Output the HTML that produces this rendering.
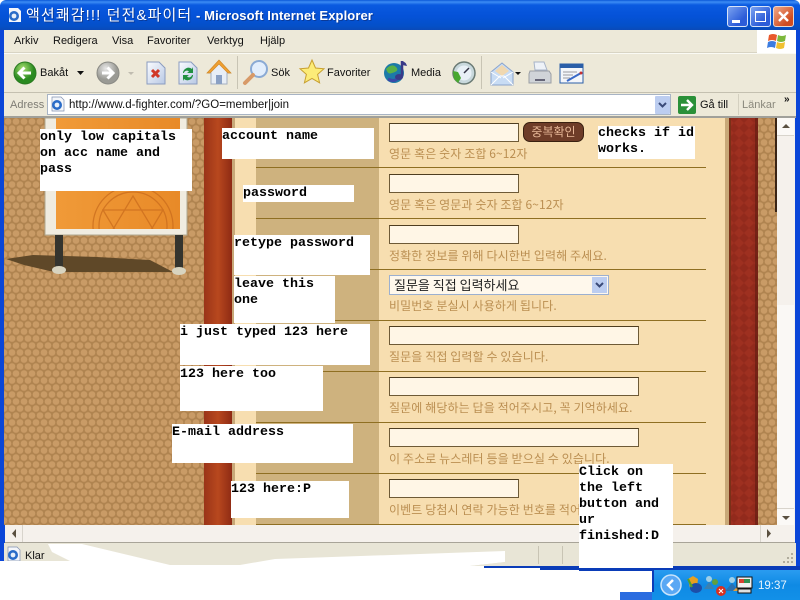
<!DOCTYPE html>
<html><head><meta charset="utf-8">
<style>
html,body{margin:0;padding:0;width:800px;height:600px;overflow:hidden;background:#fff}
body{position:relative;font-family:"Liberation Sans","Noto Sans CJK KR",sans-serif}
.a{position:absolute}
.t{position:absolute;font-size:11px;line-height:14px;color:#111;white-space:nowrap;font-family:"Liberation Sans",sans-serif}
.w{position:absolute;box-sizing:border-box;padding-top:1px;background:#fff;font:bold 13.33px/16px "Liberation Mono",monospace;color:#000;white-space:pre;overflow:hidden}
.i{position:absolute;background:#fff6e6;border:1px solid #6e5a36;border-top-color:#4e3d20;box-sizing:border-box;height:19px}
.h{position:absolute;left:389px;font:12px/14px "Noto Sans CJK KR",sans-serif;color:#bb8f52;white-space:nowrap;letter-spacing:.1px}
.l{position:absolute;left:256px;width:450px;height:1px;background:#8f6f22}
</style></head><body>

<!-- title bar -->
<div class="a" style="left:0;top:0;width:800px;height:30px;border-radius:6px 6px 0 0;background:linear-gradient(#0a58d8 0,#3c8cf4 2px,#0a5ae0 5px,#0552d8 16px,#0450c8 26px,#0a4ab8 30px)"></div>
<svg class="a" style="left:7px;top:7px" width="16" height="16"><path d="M2 1h9l3 3v11H2z" fill="#f4f6fa"/><circle cx="7" cy="9" r="5" fill="#2a6cc8"/><circle cx="7" cy="9" r="2.400" fill="#e8f0fa"/></svg>
<div class="a" style="left:26px;top:7px;font:bold 13px/18px 'Liberation Sans','Noto Sans CJK KR',sans-serif;color:#fff;white-space:nowrap;text-shadow:1px 1px #0a3a98;letter-spacing:.1px"><span style="font-size:15px;font-weight:normal;letter-spacing:1.1px">액션쾌감!!! 던전&amp;파이터</span> - Microsoft Internet Explorer</div>
<div class="a" style="left:727px;top:6px;width:21px;height:21px;box-sizing:border-box;border:1px solid #d8e4f8;border-radius:3px;background:linear-gradient(135deg,#7aa2f0,#2c5cd8 70%)"><div class="a" style="left:4px;top:13px;width:8px;height:3px;background:#fff"></div></div>
<div class="a" style="left:750px;top:6px;width:21px;height:21px;box-sizing:border-box;border:1px solid #d8e4f8;border-radius:3px;background:linear-gradient(135deg,#7aa2f0,#2c5cd8 70%)"><div class="a" style="left:4px;top:4px;width:11px;height:11px;box-sizing:border-box;border:1px solid #fff;border-top-width:2px"></div></div>
<div class="a" style="left:773px;top:6px;width:21px;height:21px;box-sizing:border-box;border:1px solid #e8d8d0;border-radius:3px;background:linear-gradient(135deg,#f0a888,#d04c20 75%)"><svg width="19" height="19"><path d="M5 5l9 9M14 5l-9 9" stroke="#fff" stroke-width="2.400"/></svg></div>

<!-- chrome -->
<div class="a" style="left:0;top:30px;width:800px;height:536px;background:#0a46d8"></div>
<div class="a" style="left:4px;top:30px;width:792px;height:88px;background:#ede9d9"></div>
<div class="a" style="left:4px;top:52px;width:792px;height:1px;background:#d8d4c4"></div>
<div class="a" style="left:4px;top:53px;width:792px;height:1px;background:#fafaf4"></div>
<div class="a" style="left:4px;top:92px;width:792px;height:1px;background:#c4c0b0"></div>
<div class="a" style="left:4px;top:116px;width:792px;height:2px;background:#a0a09a"></div>
<div class="t" style="left:14px;top:34px">Arkiv</div>
<div class="t" style="left:53px;top:34px">Redigera</div>
<div class="t" style="left:112px;top:34px">Visa</div>
<div class="t" style="left:147px;top:34px">Favoriter</div>
<div class="t" style="left:207px;top:34px">Verktyg</div>
<div class="t" style="left:260px;top:34px">Hjälp</div>
<div class="a" style="left:757px;top:30px;width:39px;height:23px;background:#fff"></div>
<svg class="a" style="left:767px;top:31px" width="21" height="20"><path d="M2 4q4-2 8 0l-1 6q-4-2-8 0z" fill="#e8582c"/><path d="M11 4q4 2 8 0l-1 6q-4 2-8 0z" fill="#7cb83c"/><path d="M1 11q4-2 8 0l-1 6q-4-2-8 0z" fill="#3c7ce0"/><path d="M10 11q4 2 8 0l-1 6q-4 2-8 0z" fill="#f0c030"/></svg>

<!-- toolbar -->
<svg class="a" style="left:0;top:53px" width="600" height="39">
<defs><radialGradient id="gr" cx=".4" cy=".3"><stop offset="0" stop-color="#a8e070"/><stop offset="1" stop-color="#2a8a20"/></radialGradient>
<radialGradient id="gy" cx=".4" cy=".3"><stop offset="0" stop-color="#e8e8e8"/><stop offset="1" stop-color="#9a9a94"/></radialGradient>
<linearGradient id="dc" x1="0" y1="0" x2="1" y2="1"><stop offset="0" stop-color="#fbfcff"/><stop offset="1" stop-color="#b8c8e4"/></linearGradient></defs>
<circle cx="25" cy="20" r="11" fill="url(#gr)" stroke="#2a7a20"/><path d="M31 20H20M24.500 14.500L19 20l5.500 5.500" fill="none" stroke="#fff" stroke-width="3"/>
<path d="M77 18h7l-3.500 4z" fill="#111"/>
<circle cx="108" cy="20" r="11" fill="url(#gy)" stroke="#8a8a84"/><path d="M102 20h11M107.500 14.500L113 20l-5.500 5.500" fill="none" stroke="#fff" stroke-width="3"/>
<path d="M128 19h6l-3 3z" fill="#c0bcb0"/>
<path d="M147 9h12l6 6v16h-18z" fill="url(#dc)" stroke="#8a9cc0"/><path d="M152 17l7 7M159 17l-7 7" stroke="#d03828" stroke-width="3"/>
<path d="M179 9h12l6 6v16h-18z" fill="url(#dc)" stroke="#8a9cc0"/><path d="M183 20a5.500 5.500 0 0 1 9-4l1-2v6h-6l2-1.500a3 3 0 0 0-5 1.500zM193 22a5.500 5.500 0 0 1-9 4l-1 2v-6h6l-2 1.500a3 3 0 0 0 5-1.500z" fill="#209040"/>
<path d="M209 20l10-11 11 11h-3v11h-16V20z" fill="#e8eef6" stroke="#a4aec0"/><path d="M207 20l12-13 12 13-3 0-9-9-9 9z" fill="#f0a030" stroke="#d08828" stroke-width=".7"/><rect x="216" y="22" width="6" height="9" fill="#8aa0c4"/>
<rect x="237" y="3" width="1" height="33" fill="#c8c4b4"/>
<circle cx="259" cy="16" r="8" fill="#e2eefc" stroke="#8aaad4" stroke-width="2"/><path d="M253 22l-8 8" stroke="#d89a68" stroke-width="4" stroke-linecap="round"/>
<path d="M312 7l3.500 8 8.500 .8-6.400 5.600 2 8.400-7.600-4.400-7.600 4.400 2-8.400-6.400-5.600 8.500-.8z" fill="#fcec78" stroke="#c8a030"/>
<circle cx="394" cy="20" r="10" fill="#1c7aa8"/><path d="M386 16q6-6 10-2t-4 6q-4 2-6-4z" fill="#58b048"/><path d="M388 26q6 3 9 0" stroke="#3a48a8" stroke-width="3" fill="none"/><path d="M402 8v15" stroke="#3a3a88" stroke-width="2.500"/><path d="M402 8q4 1 5 5l-5-1z" fill="#3a3a88"/><ellipse cx="399" cy="24" rx="4" ry="3" fill="#3a3a88"/>
<circle cx="464" cy="20" r="11" fill="#c8d8dc" stroke="#6a7a74" stroke-width="1.500"/><circle cx="464" cy="20" r="7.500" fill="#e8f0f6"/><path d="M464 20l5-5" stroke="#334" stroke-width="1.500"/><path d="M453 18l5 1 3 6-3 5-4-4z" fill="#48a830"/>
<rect x="481" y="3" width="1" height="33" fill="#c8c4b4"/>
<path d="M491 19l11-9 11 9v13h-22z" fill="#c8dcf4" stroke="#8aa4cc"/><path d="M495 18l7-6 7 6-7 5z" fill="#f0d8b0"/><path d="M491 32l9-9h4l9 9M491 19l10 6M513 19l-10 6" fill="none" stroke="#fff"/>
<path d="M515 19h6l-3 3z" fill="#111"/>
<path d="M534 9h10l3 8h-12z" fill="#eef2f8" stroke="#a8b4c8"/><path d="M530 18h19l2 3v9h-22v-9z" fill="#d0d4d8" stroke="#9a9ea4"/><rect x="535" y="26" width="10" height="2" fill="#667"/>
<rect x="560" y="11" width="23" height="19" fill="#f4f6fa" stroke="#2a5ea8"/><rect x="560" y="11" width="23" height="4" fill="#2a5ea8"/><path d="M563 19h14M563 22h10M563 25h7" stroke="#9a9aa0"/><path d="M567 28l14-8" stroke="#3a6ac8" stroke-width="2"/><circle cx="581" cy="20" r="1.500" fill="#c83030"/>
</svg>
<div class="t" style="left:40px;top:66px">Bakåt</div>
<div class="t" style="left:271px;top:66px">Sök</div>
<div class="t" style="left:327px;top:66px">Favoriter</div>
<div class="t" style="left:411px;top:66px">Media</div>

<!-- address -->
<div class="t" style="left:10px;top:98px;color:#7e7c74">Adress</div>
<div class="a" style="left:47px;top:94px;width:624px;height:21px;box-sizing:border-box;border:1px solid #a8b4c4;background:#fff"></div>
<svg class="a" style="left:50px;top:96px" width="16" height="16"><path d="M2 1h9l3 3v11H2z" fill="#f4f6fa" stroke="#8090b0" stroke-width=".7"/><circle cx="7" cy="9" r="5" fill="#2a6cc8"/><circle cx="7" cy="9" r="2.400" fill="#e8f0fa"/></svg>
<div class="t" style="left:69px;top:98px;font-size:11.500px">http://www.d-fighter.com/?GO=member|join</div>
<div class="a" style="left:655px;top:96px;width:15px;height:18px;background:#bccdf0;border-radius:1px"><svg width="15" height="18"><path d="M4 7l3.500 3.500L11 7" fill="none" stroke="#3a4a78" stroke-width="2"/></svg></div>
<svg class="a" style="left:678px;top:96px" width="18" height="18"><rect width="18" height="18" rx="2" fill="#2a9038"/><path d="M3 9h11M9 4l5 5-5 5" fill="none" stroke="#fff" stroke-width="2.400"/></svg>
<div class="t" style="left:700px;top:98px">Gå till</div>
<div class="a" style="left:738px;top:94px;width:1px;height:21px;background:#d4d0c0"></div>
<div class="t" style="left:742px;top:98px;color:#8a887c">Länkar</div>
<div class="t" style="left:784px;top:93px;font-weight:bold;font-size:10px">»</div>

<!-- content -->
<svg class="a" style="left:4px;top:118px" width="774" height="407">
<defs>
<pattern id="hex" width="8" height="14" patternUnits="userSpaceOnUse"><rect width="8" height="14" fill="#b08450"/><circle cx="4" cy="3.500" r="3.300" fill="#c99b66"/><circle cx="0" cy="10.500" r="3.300" fill="#c99b66"/><circle cx="8" cy="10.500" r="3.300" fill="#c99b66"/></pattern>
<pattern id="red" width="10" height="10" patternUnits="userSpaceOnUse"><rect width="10" height="10" fill="#922a1c"/><path d="M0 5L5 0l5 5-5 5z" fill="#9e3020"/></pattern>
<linearGradient id="red2" x1="0" x2="1" y1="0" y2="0"><stop offset="0" stop-color="#9a3418"/><stop offset=".5" stop-color="#b8481e"/><stop offset="1" stop-color="#8e2a14"/></linearGradient>
<linearGradient id="org" x1="0" x2="1" y1="0" y2="0"><stop offset="0" stop-color="#f09a38"/><stop offset="1" stop-color="#e88a28"/></linearGradient>
<clipPath id="bd"><rect x="52" y="0" width="124" height="111"/></clipPath>
</defs>
<rect width="200" height="407" fill="url(#hex)"/>
<rect x="200" width="28" height="407" fill="url(#red2)"/>
<rect x="228" width="3" height="407" fill="#c8a878"/>
<rect x="231" width="21" height="407" fill="#f7deb0"/>
<rect x="252" width="123" height="407" fill="#ceb27e"/>
<rect x="375" width="346" height="407" fill="#f7deb0"/>
<rect x="721" width="4" height="407" fill="#c8a878"/>
<rect x="725" width="29" height="407" fill="url(#red)"/>
<rect x="725" width="2" height="407" fill="#7a3018"/>
<rect x="751" width="3" height="407" fill="#5c1a10" opacity=".6"/>
<rect x="754" width="19" height="407" fill="url(#hex)"/>
<rect x="771" width="2" height="94" fill="#3a2414"/>
<!-- sign -->
<path d="M41 0h142v117H41z" fill="#f0ece0" stroke="#b0a890"/>
<rect x="52" width="124" height="111" fill="url(#org)"/>
<g clip-path="url(#bd)" fill="none" stroke="#c86a1c" stroke-width="1.300" opacity=".7"><circle cx="129" cy="108" r="40"/><circle cx="129" cy="108" r="34"/><path d="M99 128l30-50 30 50zM99 92h60l-30 50z"/></g>
<path d="M2 141l27-4 64 2 53 3 23 12-119 0-30-7z" fill="#5f4828"/>
<rect x="51" y="117" width="8" height="33" fill="#34342e"/><rect x="171" y="117" width="8" height="33" fill="#34342e"/>
<ellipse cx="55" cy="152" rx="7" ry="4" fill="#d8d4c0"/><ellipse cx="175" cy="153" rx="7" ry="4" fill="#d8d4c0"/>
</svg>
<div class="l" style="top:167px"></div><div class="l" style="top:218px"></div><div class="l" style="top:269px"></div><div class="l" style="top:320px"></div><div class="l" style="top:371px"></div><div class="l" style="top:422px"></div><div class="l" style="top:473px"></div><div class="l" style="top:524px"></div>

<div class="i" style="left:389px;top:123px;width:130px"></div>
<div class="a" style="left:523px;top:122px;width:61px;height:20px;box-sizing:border-box;background:#6e3c28;border:1px solid #3a2010;border-radius:7px;color:#e8b898;font:12px/18px 'Noto Sans CJK KR',sans-serif;text-align:center">중복확인</div>
<div class="h" style="top:147px">영문 혹은 숫자 조합 6~12자</div>
<div class="i" style="left:389px;top:174px;width:130px"></div>
<div class="h" style="top:198px">영문 혹은 영문과 숫자 조합 6~12자</div>
<div class="i" style="left:389px;top:225px;width:130px"></div>
<div class="h" style="top:249px">정확한 정보를 위해 다시한번 입력해 주세요.</div>
<div class="a" style="left:389px;top:275px;width:220px;height:20px;box-sizing:border-box;background:#fff8ec;border:1px solid #9cb0d0;font:13px/18px 'Noto Sans CJK KR',sans-serif;color:#222;padding-left:4px">질문을 직접 입력하세요</div>
<div class="a" style="left:592px;top:277px;width:15px;height:16px;background:#bccdf0"><svg width="15" height="16"><path d="M4 6l3.500 3.500L11 6" fill="none" stroke="#3a4a78" stroke-width="2"/></svg></div>
<div class="h" style="top:299px">비밀번호 분실시 사용하게 됩니다.</div>
<div class="i" style="left:389px;top:326px;width:250px"></div>
<div class="h" style="top:350px">질문을 직접 입력할 수 있습니다.</div>
<div class="i" style="left:389px;top:377px;width:250px"></div>
<div class="h" style="top:401px">질문에 해당하는 답을 적어주시고, 꼭 기억하세요.</div>
<div class="i" style="left:389px;top:428px;width:250px"></div>
<div class="h" style="top:452px">이 주소로 뉴스레터 등을 받으실 수 있습니다.</div>
<div class="i" style="left:389px;top:479px;width:130px"></div>
<div class="h" style="top:503px">이벤트 당첨시 연락 가능한 번호를 적어주세요.</div>

<!-- vertical scrollbar -->
<div class="a" style="left:777px;top:118px;width:18px;height:407px;background:#f5f1ec"></div>
<div class="a" style="left:777px;top:305px;width:17px;height:203px;background:#faf8f5"></div>
<div class="a" style="left:777px;top:118px;width:17px;height:17px;background:#fbf9f6;border-bottom:1px solid #d8d4cc"><svg width="17" height="17"><path d="M5 10l4-4 4 4z" fill="#5a5040"/></svg></div>
<div class="a" style="left:777px;top:508px;width:17px;height:17px;background:#fbf9f6;border-top:1px solid #d8d4cc"><svg width="17" height="17"><path d="M5 7l4 4 4-4z" fill="#5a5040"/></svg></div>
<!-- horizontal scrollbar -->
<div class="a" style="left:5px;top:525px;width:790px;height:17px;background:#f5f1ec;border-bottom:1px solid #a8a498"></div>
<div class="a" style="left:5px;top:525px;width:17px;height:17px;border-right:1px solid #d8d4cc"><svg width="17" height="17"><path d="M11 4l-4 4.500 4 4.500z" fill="#5a5040"/></svg></div>
<div class="a" style="left:760px;top:525px;width:18px;height:17px;border-left:1px solid #d8d4cc"><svg width="17" height="17"><path d="M6 4l4 4.500-4 4.500z" fill="#5a5040"/></svg></div>
<!-- status bar -->
<div class="a" style="left:4px;top:543px;width:792px;height:23px;background:#e8e5d6"></div>
<div class="a" style="left:538px;top:546px;width:1px;height:18px;background:#c8c4b4"></div>
<div class="a" style="left:562px;top:546px;width:1px;height:18px;background:#c8c4b4"></div>
<svg class="a" style="left:6px;top:546px" width="16" height="16"><path d="M2 1h9l3 3v11H2z" fill="#f4f6fa" stroke="#8090b0" stroke-width=".7"/><circle cx="7" cy="9" r="5" fill="#2a6cc8"/><circle cx="7" cy="9" r="2.400" fill="#e8f0fa"/></svg>
<div class="t" style="left:25px;top:549px">Klar</div>
<svg class="a" style="left:782px;top:552px" width="12" height="12"><path d="M9 1h2v2H9zM5 5h2v2H5zM9 5h2v2H9zM1 9h2v2H1zM5 9h2v2H5zM9 9h2v2H9z" fill="#b0ac9c"/></svg>

<!-- white scrawl + bottom -->
<svg class="a" style="left:0;top:540px" width="800" height="60">
<path d="M0 21H70L52 12 48 4 82 4 170 25 240 25 275 19 505 11 505 22 470 26H652V60H0z" fill="#fff"/>
<path d="M470 26L505 22 540 26z" fill="#e8e5d6"/>
</svg>
<div class="a" style="left:484px;top:566px;width:56px;height:2px;background:#0a3cb8"></div>
<div class="a" style="left:540px;top:566px;width:40px;height:4px;background:#0a3cb8"></div>
<!-- taskbar -->
<div class="a" style="left:579px;top:566px;width:221px;height:5px;background:#0a3cb8"></div>
<div class="a" style="left:620px;top:592px;width:40px;height:8px;background:#2a6ce0"></div>
<div class="a" style="left:652px;top:570px;width:148px;height:30px;background:linear-gradient(#2a9cf0,#0f8ae4 50%,#1290e8)"></div>
<div class="a" style="left:652px;top:570px;width:2px;height:22px;background:#0a3cb8"></div>
<svg class="a" style="left:655px;top:573px" width="100" height="26">
<circle cx="16" cy="12" r="10" fill="#5aa8f4" stroke="#c8e4fc" stroke-width="1.500"/><path d="M18 7l-5 5 5 5" fill="none" stroke="#fff" stroke-width="2.500"/>
<path d="M33 6l5-3 5 3-1 8-7 1z" fill="#e8a020"/><ellipse cx="41" cy="15" rx="6" ry="5" fill="#1c4ea8"/><path d="M33 6l4 8" stroke="#50a030" stroke-width="2"/>
<circle cx="54" cy="6" r="3" fill="#a0d0e8"/><path d="M49 16l5-7 5 7z" fill="#3a80b0"/><circle cx="60" cy="9" r="3" fill="#60a040"/><circle cx="66" cy="18" r="5" fill="#d83020"/><path d="M64 16l4 4M68 16l-4 4" stroke="#fff"/>
<circle cx="77" cy="7" r="3" fill="#a0d0e8"/><path d="M70 18l7-8 7 8z" fill="#2a70b0"/><path d="M78 18l5-5 5 5z" fill="#e0a040"/>
</svg>
<svg class="a" style="left:736px;top:576px" width="18" height="20"><rect x="1" y="1" width="15" height="11" fill="#f0f0f0" stroke="#111"/><rect x="3" y="3" width="5" height="4" fill="#d84030"/><rect x="8" y="3" width="6" height="4" fill="#309050"/><rect x="2" y="13" width="13" height="4" fill="#e0e0e0" stroke="#111"/></svg>
<div class="t" style="left:758px;top:579px;color:#e8f4fc;font-size:11.500px">19:37</div>

<!-- white labels -->
<div class="w" style="left:40px;top:129px;width:152px;height:62px">only low capitals
on acc name and
pass</div>
<div class="w" style="left:222px;top:128px;width:152px;height:31px">account name</div>
<div class="w" style="left:243px;top:185px;width:111px;height:17px">password</div>
<div class="w" style="left:234px;top:235px;width:136px;height:40px">retype password</div>
<div class="w" style="left:234px;top:276px;width:101px;height:47px">leave this
one</div>
<div class="w" style="left:180px;top:324px;width:190px;height:41px">i just typed 123 here</div>
<div class="w" style="left:180px;top:366px;width:143px;height:45px">123 here too</div>
<div class="w" style="left:172px;top:424px;width:181px;height:39px">E-mail address</div>
<div class="w" style="left:231px;top:481px;width:118px;height:37px">123 here:P</div>
<div class="w" style="left:579px;top:464px;width:94px;height:104px">Click on
the left
button and
ur
finished:D</div>
<div class="w" style="left:598px;top:126px;width:97px;height:33px;padding-top:0">checks if id
works.</div>
</body></html>
